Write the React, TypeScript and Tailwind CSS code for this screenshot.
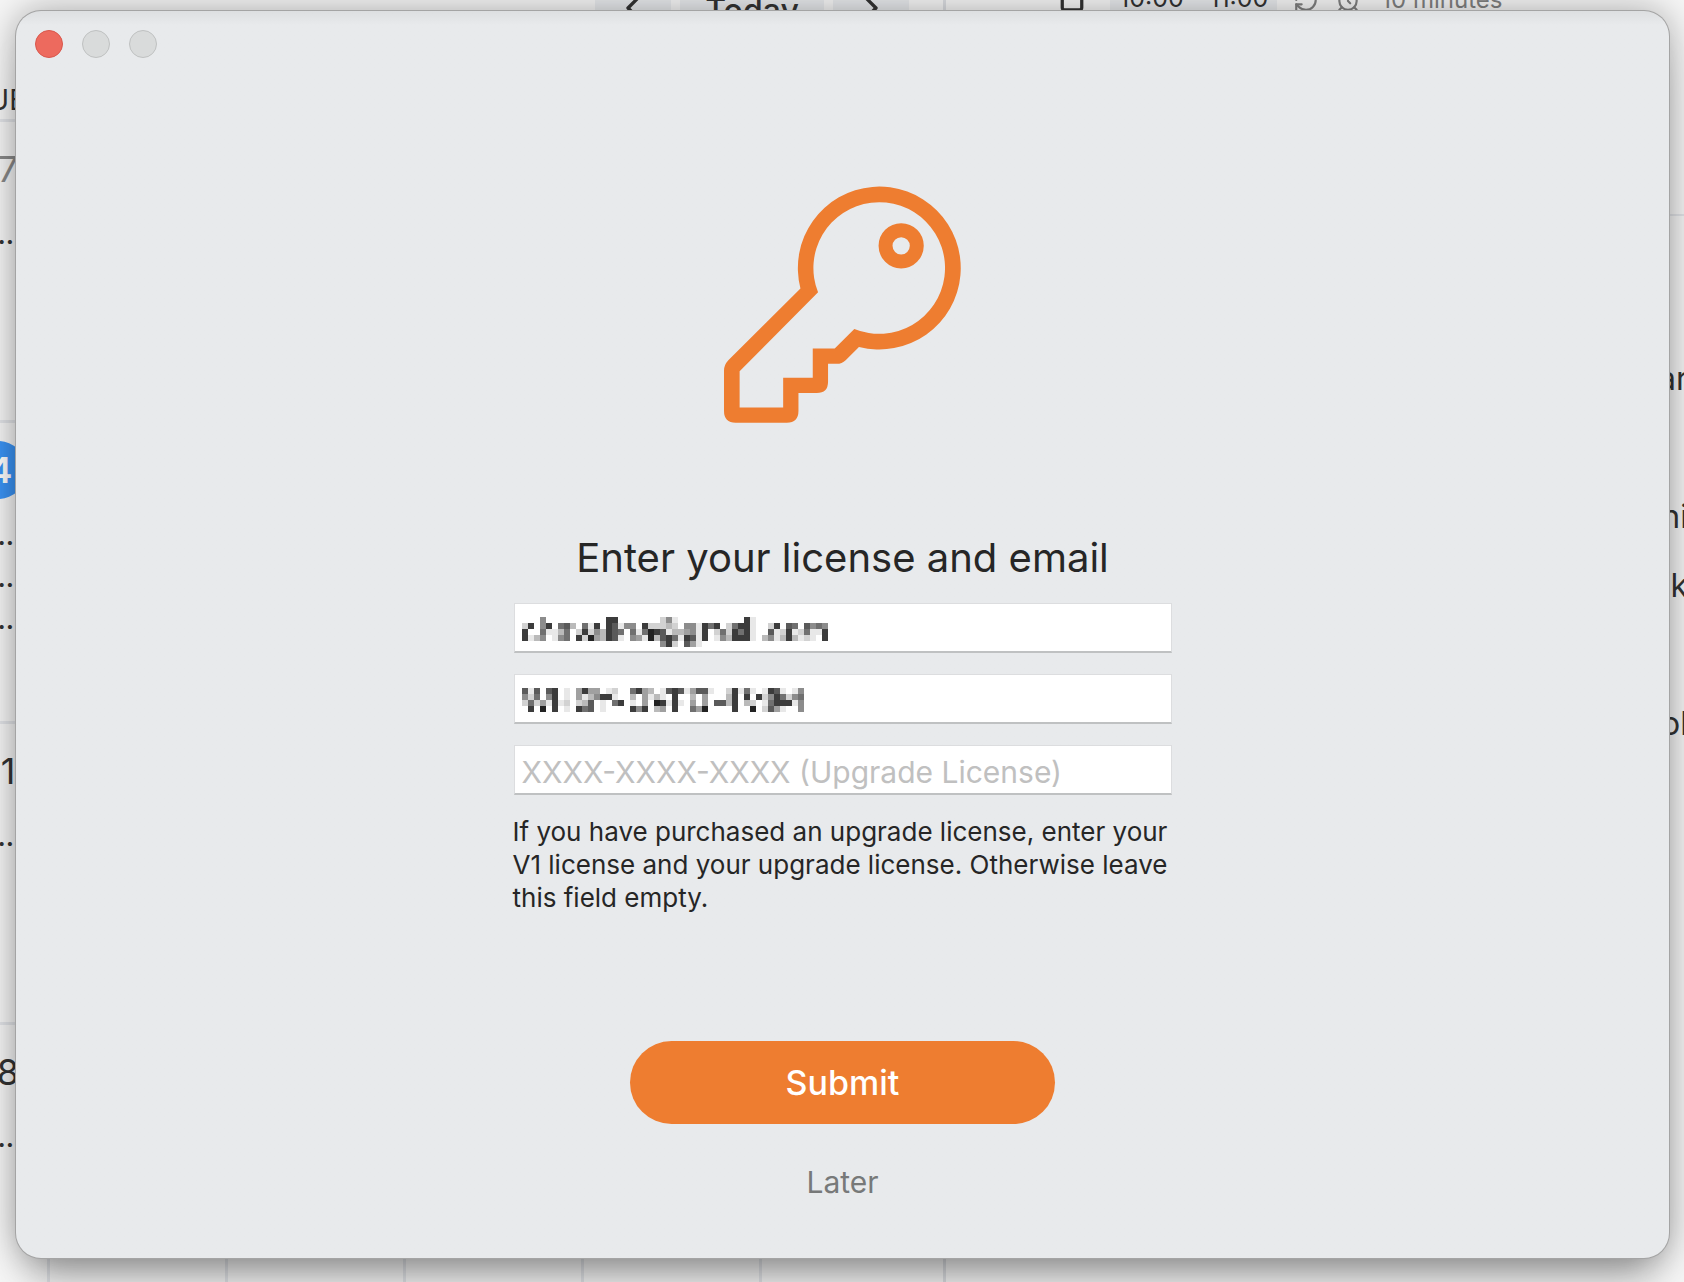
import React from 'react';
import { AlarmClock, ChevronLeft, ChevronRight, RotateCcw, Square } from 'lucide-react';

const weeks = [
    { day: '07', state: 'past', events: 1 },
    { day: '14', state: 'today', events: 3 },
    { day: '21', state: 'next', events: 1 },
    { day: '28', state: 'next', events: 1 }
];

const dayStyles: Record<string, string> = {
    past: 'text-[#8a8a8a]',
    today: 'bg-[#3b94f5] text-white font-semibold pr-2',
    next: 'text-[#333333]'
};

const sidebarRows = ['ar', '', 'ni', 'rk', '', 'ol'];

// Each digit is the darkness of one block, 0 is empty
const emailBlocks = [
    '000500000000008800000002510000000000081000000000000',
    '280580673061808715508222320551868026881002807607565',
    '800611360282538760616987133451802628681007128126118',
    '813501560829438710541937861871801538881035138312108',
    '000000000000000000000005820741000000000000000000000'
];

const licenseBlocks = [
    '71707801048440120068430178714771002816101871015',
    '52605801041358810030413108003040003808082586256',
    '26241812023701068010409818104040773803201688815',
    '08090801086701000085803408006490000800902741005'
];

const blockColors = ['none', '#e8e8e8', '#d2d2d2', '#bababa', '#a0a0a0', '#8c8c8c', '#707070', '#5a5a5a', '#3c3c3c', '#222222'];

const Mosaic: React.FC<{ rows: string[] }> = ({ rows }) => (
    <svg
        aria-hidden="true"
        className="absolute left-2 top-[14px] pointer-events-none"
        width={rows[0].length * 6}
        height={rows.length * 6}
        shapeRendering="crispEdges"
    >
        {rows.map((row, y) =>
            row.split('').map((level, x) =>
                level === '0' ? null : (
                    <rect key={`${x}-${y}`} x={x * 6} y={y * 6} width="6" height="6" fill={blockColors[Number(level)]} />
                )
            )
        )}
    </svg>
);

const KeyIcon: React.FC = () => (
    <svg aria-hidden="true" className="w-[237px] h-[237px]" viewBox="71 47 713 713" fill="#ee7d30">
        <path
            fillRule="evenodd"
            d="M301 355 L84 571 Q71 585 71 602 V724 Q71 759 106 759 H260 Q295 759 295 724 V670 H350 Q384 670 384 636 V582 H410 Q426 582 437 571 L477 531 A245 245 0 1 0 301 355 Z M354 367 L118 604 V713 H249 V624 H338 V536 H404 L463 477 A198 198 0 1 0 354 367 Z"
        />
        <circle cx="604" cy="227" r="47" fill="none" stroke="#ee7d30" strokeWidth="42" />
    </svg>
);

const Calendar: React.FC = () => (
    <div className="flex h-screen bg-[#f6f6f6] text-[#333333]">
        <div className="w-[943px] shrink-0 flex flex-col overflow-hidden">
            <div className="flex justify-end gap-[9px] -mt-4 h-[100px] pr-[34px] shrink-0">
                <button aria-label="Previous month" className="w-[76px] h-12 bg-[#e8eaed] flex items-center justify-center">
                    <ChevronLeft size={40} strokeWidth={2} />
                </button>
                <button className="w-36 h-[54px] bg-[#e8eaed] text-[32px] font-medium">Today</button>
                <button aria-label="Next month" className="w-[76px] h-12 bg-[#e8eaed] flex items-center justify-center">
                    <ChevronRight size={40} strokeWidth={2} />
                </button>
            </div>
            <div className="flex justify-end w-12 h-[35px] pr-[22px] text-[28px] leading-8 shrink-0">TUE</div>
            {weeks.map((week) => (
                <div key={week.day} className="flex h-[301px] shrink-0 border-t-[3px] border-[#e2e4e8]">
                    <div className="w-[50px] shrink-0 flex flex-col items-end border-r-[3px] border-[#e2e4e8] pt-[18px]">
                        <div className={`flex items-center justify-center w-[60px] h-[58px] mr-5 mb-4 rounded-full text-[36px] shrink-0 ${dayStyles[week.state]}`}>
                            {week.day}
                        </div>
                        {Array.from({ length: week.events }, (_, i) => (
                            <div key={i} className="pr-[33px] text-[26px] leading-[42px] font-semibold">...</div>
                        ))}
                    </div>
                    <div className="w-[178px] border-r-[3px] border-[#e2e4e8]"></div>
                    <div className="w-[178px] border-r-[3px] border-[#e2e4e8]"></div>
                    <div className="w-[178px] border-r-[3px] border-[#e2e4e8]"></div>
                    <div className="w-[178px] border-r-[3px] border-[#e2e4e8]"></div>
                </div>
            ))}
        </div>
        <div className="flex-1 min-w-0 border-l-[3px] border-[#dcdee2] overflow-hidden">
            <div className="flex items-center h-12 -mt-6 pl-[113px]">
                <Square size={26} strokeWidth={3} />
                <div className="h-12 ml-[25px] px-[9px] bg-[#e8eaed] text-[25px] leading-[44px] whitespace-nowrap">10:00 - 11:00</div>
                <RotateCcw size={26} className="ml-4 -scale-y-100 text-[#808080]" />
                <AlarmClock size={26} className="ml-4 text-[#808080]" />
                <div className="ml-5 text-[24px] text-[#808080] whitespace-nowrap">10 minutes</div>
            </div>
            <div className="mt-[190px] pt-[128px] border-t-2 border-[#e2e4e8]">
                {sidebarRows.map((row, i) => (
                    <div key={i} className="h-[69px] -mr-1 text-right text-[32px] leading-[69px]">{row}</div>
                ))}
            </div>
        </div>
    </div>
);

const App: React.FC = () => {
    return (
        <div className="relative min-h-screen overflow-hidden font-['Inter',sans-serif]">
            <Calendar />

            <main className="absolute left-4 right-[15px] top-[11px] bottom-6 flex flex-col rounded-[25px] bg-[#e8eaec] bg-linear-to-b from-[#dddfe1] to-[#e8eaec] to-[14px] shadow-[0_0_0_1px_#a4a4a4,0_0_36px_rgba(0,0,0,0.34),0_36px_40px_-16px_rgba(0,0,0,0.28)]">
                <div className="flex gap-[19px] pl-[19px] pt-[19px]">
                    <button aria-label="Close" className="w-7 h-7 rounded-full border border-[#d9574c] bg-[#ed6a5e]"></button>
                    <button aria-label="Minimize" className="w-7 h-7 rounded-full border border-[#bfc1c1] bg-[#d9dbdb]"></button>
                    <button aria-label="Zoom" className="w-7 h-7 rounded-full border border-[#bfc1c1] bg-[#d9dbdb]"></button>
                </div>

                <form className="flex flex-col items-center pt-32" onSubmit={(e) => e.preventDefault()}>
                    <KeyIcon />
                    <h1 className="mt-[111px] text-[40px] leading-[48px] text-[#262626]">Enter your license and email</h1>

                    <div className="w-[658px] mt-[21px] flex flex-col gap-[21px]">
                        <div className="relative">
                            <input aria-label="Email" type="text" className="block w-full h-[50px] px-2 bg-white border border-[#dcdddf] border-b-2 border-b-[#bfc1c2] text-[30px] outline-none" />
                            <Mosaic rows={emailBlocks} />
                        </div>
                        <div className="relative">
                            <input aria-label="License" type="text" className="block w-full h-[50px] px-2 bg-white border border-[#dcdddf] border-b-2 border-b-[#bfc1c2] text-[30px] outline-none" />
                            <Mosaic rows={licenseBlocks} />
                        </div>
                        <input
                            aria-label="Upgrade license"
                            aria-describedby="upgrade-help"
                            type="text"
                            placeholder="XXXX-XXXX-XXXX (Upgrade License)"
                            className="block w-full h-[50px] px-[7px] pt-1 bg-white border border-[#dcdddf] border-b-2 border-b-[#bfc1c2] text-[30px] placeholder:text-[#c0c0c0] outline-none"
                        />
                    </div>
                    <p id="upgrade-help" className="w-[660px] mt-5 text-[26px] leading-[33px] text-[#262626] whitespace-nowrap">
                        If you have purchased an upgrade license, enter your<br />
                        V1 license and your upgrade license. Otherwise leave<br />
                        this field empty.
                    </p>

                    <button type="submit" className="w-[425px] h-[83px] mt-[127px] rounded-full bg-[#ee7d30] text-white text-[34px] font-medium">
                        Submit
                    </button>
                    <button type="button" className="mt-9 text-[30px] leading-[44px] text-[#777979]">Later</button>
                </form>
            </main>
        </div>
    );
};

export default App;
